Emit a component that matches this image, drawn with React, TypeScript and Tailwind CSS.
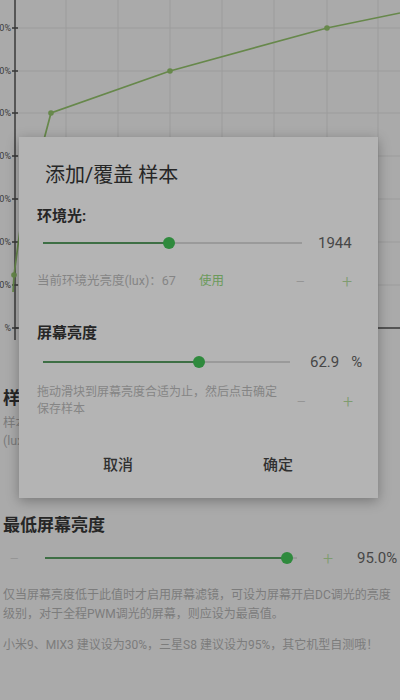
import React from "react";

const font = { fontFamily: "Roboto, 'Noto Sans CJK SC', sans-serif" };

const hLines = [28, 71, 113, 156, 199, 242, 285, 328];
const vLines = [66, 118, 170, 222, 274, 327, 378];
const labels = ["0%", "0%", "0%", "0%", "0%", "0%", "0%", "%"];

function Chart() {
  return (
    <svg width={400} height={345} className="block">
      {hLines.map((y) => (
        <line key={y} x1={15} x2={400} y1={y} y2={y} stroke="#9c9c9c" strokeWidth={1} />
      ))}
      {vLines.map((x) => (
        <line key={x} x1={x} x2={x} y1={0} y2={328} stroke="#9c9c9c" strokeWidth={1} />
      ))}
      {hLines.map((y, i) => (
        <g key={"t" + y}>
          <line x1={12} x2={18} y1={y} y2={y} stroke="#333" strokeWidth={1.5} />
          <text x={11} y={y + 3} fontSize={9} textAnchor="end" fill="#3a3a3a" style={font}>
            {labels[i]}
          </text>
        </g>
      ))}
      <line x1={15} x2={15} y1={0} y2={340} stroke="#3a3a3a" strokeWidth={1.5} />
      <line x1={15} x2={400} y1={328} y2={328} stroke="#3a3a3a" strokeWidth={1.5} />
      <polyline
        points="13,292 14,275 20,230 51,113 170,71 327,28 400,13"
        fill="none"
        stroke="#67884b"
        strokeWidth={1.7}
      />
      {[
        [14, 275],
        [51, 113],
        [170, 71],
        [327, 28],
      ].map(([x, y]) => (
        <circle key={x} cx={x} cy={y} r={2.8} fill="#67884b" />
      ))}
    </svg>
  );
}

function Track({ width, pos }: { width: number; pos: number }) {
  return (
    <div className="relative h-[14px] shrink-0" style={{ width }}>
      <div className="absolute left-0 right-0 top-[6px] h-[2px] bg-[#9a9a9a]" />
      <div className="absolute left-0 top-[6px] h-[2px] bg-[#3e6f45]" style={{ width: pos }} />
      <div
        className="absolute top-px h-[12px] w-[12px] rounded-full bg-[#2f8a3d]"
        style={{ left: pos - 6 }}
      />
    </div>
  );
}

function Dialog() {
  return (
    <div className="absolute left-[19px] top-[137px] h-[361px] w-[359px] bg-[#b4b4b4] shadow-[0_3px_12px_rgba(0,0,0,0.3)]">
      <div className="pl-[26px] pt-[24px] text-[20px] leading-[28px] text-[#262626]">添加/覆盖 样本</div>
      <div className="mt-[16px] pl-[18px] text-[15px] font-bold leading-[22px] text-[#262626]">环境光:</div>
      <div className="mt-[6px] flex h-[20px] items-center pl-[24px]">
        <Track width={259} pos={126} />
        <span className="ml-[16px] text-[15px] text-[#474747]">1944</span>
      </div>
      <div className="mt-[18px] flex h-[20px] items-center pl-[18px] text-[12.5px]">
        <span className="w-[162px] text-[#858585]">当前环境光亮度(lux)：67</span>
        <span className="w-[96px] text-[#6b9a5b]">使用</span>
        <span className="w-[47px] text-[18px] font-light text-[#959595]">−</span>
        <span className="text-[18px] font-light text-[#7f9c70]">+</span>
      </div>
      <div className="mt-[31px] pl-[18px] text-[15px] font-bold leading-[22px] text-[#262626]">屏幕亮度</div>
      <div className="mt-[8px] flex h-[20px] items-center pl-[24px]">
        <Track width={247} pos={156} />
        <span className="ml-[20px] text-[15px] text-[#474747]">62.9</span>
        <span className="ml-[12px] text-[15px] text-[#474747]">%</span>
      </div>
      <div className="mt-[12px] flex items-center pl-[18px]">
        <div className="w-[259px] text-[12px] leading-[17px] text-[#858585]">
          <div className="whitespace-nowrap">拖动滑块到屏幕亮度合适为止，然后点击确定</div>
          <div>保存样本</div>
        </div>
        <span className="w-[47px] text-[18px] font-light text-[#959595]">−</span>
        <span className="text-[18px] font-light text-[#7f9c70]">+</span>
      </div>
      <div className="mt-[27px] flex h-[40px] px-[19px] text-[15px] font-medium text-[#303030]">
        <div className="flex w-[160px] items-center justify-center">取消</div>
        <div className="flex w-[160px] items-center justify-center">确定</div>
      </div>
    </div>
  );
}

export default function App() {
  return (
    <div className="relative h-[700px] w-[400px] overflow-hidden bg-[#aaaaaa]" style={font}>
      <Chart />
      <div className="mt-[41px] pl-[3px] text-[17px] font-bold leading-[24px] text-[#262626]">样本</div>
      <div className="mt-[4px] pl-[3px] text-[12.5px] leading-[18px] text-[#7c7c7c]">
        <div className="whitespace-nowrap">样本点：长按图表中的点可删除该样本</div>
        <div className="whitespace-nowrap">(lux) 环境光照度</div>
      </div>
      <div className="mt-[62px] pl-[3px] text-[17px] font-bold leading-[26px] text-[#262626]">最低屏幕亮度</div>
      <div className="mt-[8px] flex h-[24px] items-center">
        <span className="w-[45px] pl-[9px] text-[18px] font-light text-[#959595]">−</span>
        <Track width={252} pos={242} />
        <span className="ml-[26px] w-[34px] text-[18px] font-light text-[#7f9c70]">+</span>
        <span className="text-[15px] text-[#474747]">95.0%</span>
      </div>
      <div className="mt-[16px] pl-[3px] text-[12px] leading-[19px] text-[#7c7c7c]">
        <div className="whitespace-nowrap">仅当屏幕亮度低于此值时才启用屏幕滤镜，可设为屏幕开启DC调光的亮度</div>
        <div className="whitespace-nowrap">级别，对于全程PWM调光的屏幕，则应设为最高值。</div>
      </div>
      <div className="mt-[12px] whitespace-nowrap pl-[3px] text-[12px] leading-[19px] text-[#7c7c7c]">
        小米9、MIX3 建议设为30%，三星S8 建议设为95%，其它机型自测哦！
      </div>
      <Dialog />
    </div>
  );
}
